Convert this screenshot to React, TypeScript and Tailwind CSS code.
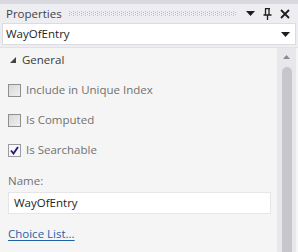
import React from "react";

function Check({ checked, label }: { checked?: boolean; label: string }) {
  return (
    <div className="flex items-center h-[20px]">
      <div
        className={
          "w-[13px] h-[13px] border flex items-center justify-center " +
          (checked
            ? "bg-[#f7f7fb] border-[#9a9aa0]"
            : "border-[#8f8f8f] bg-gradient-to-br from-[#d8d8d8] to-[#f0f0f0]")
        }
      >
        {checked && (
          <svg width="9" height="9" viewBox="0 0 9 9">
            <path d="M1 4.5 L3.5 7.5 L8 1" stroke="#1f1f6f" strokeWidth="1.9" fill="none" />
          </svg>
        )}
      </div>
      <span className="ml-[5px] text-[#717171]">{label}</span>
    </div>
  );
}

function App() {
  return (
    <div
      className="w-[298px] h-[252px] overflow-hidden bg-[#eeeef2] border-t-[4px] border-[#d9dae0] flex flex-col text-[11.5px]"
      style={{ fontFamily: '"Open Sans", "Noto Sans", sans-serif' }}
    >
      {/* title bar */}
      <div className="h-[19px] flex items-center pl-[6px] pr-[8px]">
        <span className="text-[#3f3f46] text-[11.5px]">Properties</span>
        <div className="flex-1 mx-[7px] mr-[10px] h-[5px]">
          <svg width="100%" height="5">
            <defs>
              <pattern id="dots" width="4" height="2" patternUnits="userSpaceOnUse">
                <rect x="0" y="0" width="1" height="1" fill="#bcbcc2" />
                <rect x="2" y="1" width="1" height="1" fill="#bcbcc2" />
              </pattern>
            </defs>
            <rect width="100%" height="5" fill="url(#dots)" />
          </svg>
        </div>
        <svg width="9" height="5" viewBox="0 0 9 5" className="mr-[8px]">
          <path d="M0 0 H9 L4.5 5 Z" fill="#1e1e1e" />
        </svg>
        <svg width="9" height="12" viewBox="0 0 9 12" className="mr-[8px]">
          <path d="M2 0.5 H7 M2.5 0.5 V7 M6 0.5 V7 M0.5 7 H8.5 M4.5 7 V12" stroke="#1e1e1e" strokeWidth="1.3" fill="none" />
        </svg>
        <svg width="10" height="10" viewBox="0 0 10 10">
          <path d="M1 1 L9 9 M9 1 L1 9" stroke="#1e1e1e" strokeWidth="1.8" />
        </svg>
      </div>
      {/* object selector */}
      <div className="mx-[2px] h-[22px] bg-white border border-[#dcdce0] flex items-center pl-[3px] pr-[5px]">
        <span className="flex-1 text-[#1e1e1e] text-[11.5px]">WayOfEntry</span>
        <svg width="9" height="5" viewBox="0 0 9 5">
          <path d="M0 0 H9 L4.5 5 Z" fill="#1e1e1e" />
        </svg>
      </div>
      {/* content */}
      <div className="flex-1 mt-[2px] bg-[#f5f5f5] border-t border-[#e2e2e6] flex">
        <div className="flex-1 pl-[8px] pr-[6px]">
          <div className="flex items-center h-[20px] mt-[2px] pl-[2px]">
            <svg width="6" height="6" viewBox="0 0 6 6">
              <path d="M6 0 V6 H0 Z" fill="#444" />
            </svg>
            <span className="ml-[6px] text-[#3a3a3a]">General</span>
          </div>
          <div className="mt-[10px] flex flex-col gap-[10px]">
            <Check label="Include in Unique Index" />
            <Check label="Is Computed" />
            <Check checked label="Is Searchable" />
          </div>
          <div className="mt-[13px] text-[#717171] h-[16px] flex items-center">Name:</div>
          <div className="mt-[3px] h-[22px] bg-white border border-[#e6e6e6] flex items-center pl-[5px] text-[#1e1e1e]">
            WayOfEntry
          </div>
          <div className="mt-[10px] h-[20px] flex items-center">
            <span className="text-[#1e63a8] underline underline-offset-2">Choice List...</span>
          </div>
        </div>
        {/* scrollbar */}
        <div className="w-[19px] mr-[2px] bg-[#e8e8ec] flex flex-col items-center pt-[7px]">
          <svg width="7" height="4" viewBox="0 0 7 4">
            <path d="M0 4 L3.5 0 L7 4 Z" fill="#8a8a8e" />
          </svg>
          <div className="mt-[8px] w-[10px] flex-1 bg-[#c6c6cc] rounded-t-[5px]" />
        </div>
      </div>
    </div>
  );
}

export default App;
